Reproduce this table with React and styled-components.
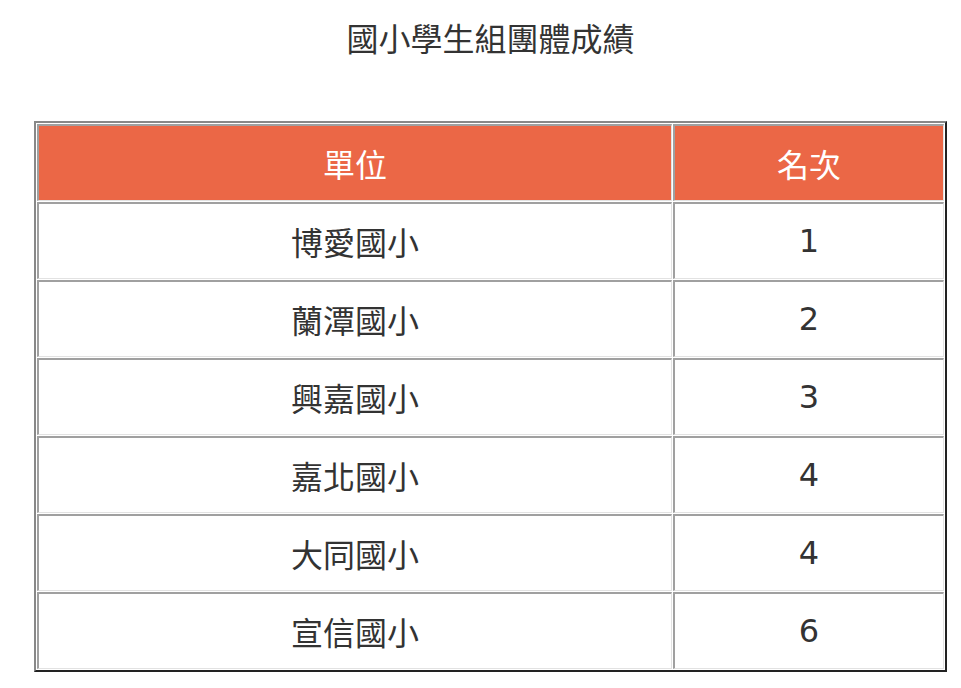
import React from 'react'
import styled, { createGlobalStyle } from 'styled-components'

const GlobalStyle = createGlobalStyle`
  body {
    margin: 0;
    background: #fff;
    font-family: "DejaVu Sans", "Noto Sans CJK TC", sans-serif;
    color: #333;
  }
`

const Page = styled.div`
  padding: 17px 14px 0 34px;
`

const Title = styled.h2`
  margin: 0 0 58px;
  width: 913px;
  text-align: center;
  font-weight: 400;
  font-size: 32px;
  line-height: 46px;
  color: #333;
`

const Table = styled.table`
  width: 913px;
  border-collapse: separate;
  border-spacing: 1px;
  border-style: solid;
  border-width: 2px;
  border-color: #888 #222 #222 #888;
`

const Cell = styled.td`
  box-sizing: border-box;
  height: 77px;
  width: ${p => p.$w}px;
  padding: 0;
  text-align: center;
  vertical-align: middle;
  font-size: 32px;
  font-weight: 400;
  border-style: solid;
  border-width: 2px 1px 1px 2px;
  border-color: #a0a0a0 #e2e2e2 #e2e2e2 #a0a0a0;
  background: ${p => (p.$head ? '#eb6746' : '#fff')};
  color: ${p => (p.$head ? '#fff' : '#333')};
`

const rows = [
  ['博愛國小', '1'],
  ['蘭潭國小', '2'],
  ['興嘉國小', '3'],
  ['嘉北國小', '4'],
  ['大同國小', '4'],
  ['宣信國小', '6'],
]

export default function App() {
  return (
    <Page>
      <GlobalStyle />
      <Title>國小學生組團體成績</Title>
      <Table>
        <thead>
          <tr>
            <Cell as="th" $head $w={635}>單位</Cell>
            <Cell as="th" $head $w={271}>名次</Cell>
          </tr>
        </thead>
        <tbody>
          {rows.map(([name, rank], i) => (
            <tr key={i}>
              <Cell $w={635}>{name}</Cell>
              <Cell $w={271}>{rank}</Cell>
            </tr>
          ))}
        </tbody>
      </Table>
    </Page>
  )
}
